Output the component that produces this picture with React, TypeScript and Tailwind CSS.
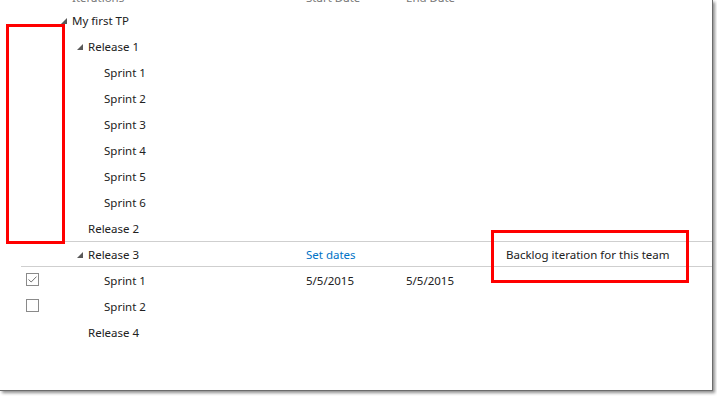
import React from "react";

type Row = {
  label: string;
  level: number;
  expanded?: boolean;
  check?: "on" | "off";
  start?: string;
  end?: string;
  link?: boolean;
  selected?: boolean;
};

const rows: Row[] = [
  { label: "My first TP", level: 0, expanded: true },
  { label: "Release 1", level: 1, expanded: true },
  { label: "Sprint 1", level: 2 },
  { label: "Sprint 2", level: 2 },
  { label: "Sprint 3", level: 2 },
  { label: "Sprint 4", level: 2 },
  { label: "Sprint 5", level: 2 },
  { label: "Sprint 6", level: 2 },
  { label: "Release 2", level: 1 },
  { label: "Release 3", level: 1, expanded: true, link: true, selected: true },
  { label: "Sprint 1", level: 2, check: "on", start: "5/5/2015", end: "5/5/2015" },
  { label: "Sprint 2", level: 2, check: "off" },
  { label: "Release 4", level: 1 },
];

const pad = ["pl-[10px]", "pl-[26px]", "pl-[42px]"];

const Caret = () => (
  <svg width="6" height="6" viewBox="0 0 6 6" className="block -mt-[1px]">
    <path d="M6 0 L6 6 L0 6 Z" fill="#595959" />
  </svg>
);

const CheckBox = ({ on }: { on: boolean }) => (
  <div className="w-[13px] h-[13px] -mt-[3px] border border-[#8a8a8a] bg-white flex items-center justify-center">
    {on && (
      <svg width="9" height="7" viewBox="0 0 9 7">
        <path d="M0.5 3.5 L3.2 6 L8.5 0.6" fill="none" stroke="#6f6f6f" strokeWidth="1" />
      </svg>
    )}
  </div>
);

export default function App() {
  return (
    <div className="w-[717px] h-[396px] bg-white" style={{ fontFamily: "'Segoe UI', 'Noto Sans', sans-serif" }}>
      <div className="relative w-[713px] h-[391px] bg-white border-r border-b border-[#6b6b6b] shadow-[2px_2px_3px_rgba(0,0,0,0.45)] overflow-hidden text-[11.5px] text-[#212121]">
        {/* column headers, scrolled mostly out of view */}
        <div className="h-[7px] overflow-hidden flex text-[#777]">
          <div className="w-[72px] shrink-0" />
          <div className="w-[234px] shrink-0 -mt-[11px]">Iterations</div>
          <div className="w-[100px] shrink-0 -mt-[11px]">Start Date</div>
          <div className="w-[100px] shrink-0 -mt-[11px]">End Date</div>
        </div>

        {rows.map((r, i) => (
          <div
            key={i}
            className={
              "flex items-center h-[26px] pt-[2px] ml-[21px] " +
              (r.selected ? "border-y border-[#cfcfcf]" : "border-y border-transparent")
            }
          >
            <div className="w-[30px] shrink-0 pl-[5px]">
              {r.check && <CheckBox on={r.check === "on"} />}
            </div>
            <div className={"w-[255px] shrink-0 flex items-center " + pad[r.level]}>
              <div className="w-[11px] shrink-0">{r.expanded && <Caret />}</div>
              <span>{r.label}</span>
            </div>
            <div className="w-[100px] shrink-0">
              {r.link ? <span className="text-[#0072c6]">Set dates</span> : r.start}
            </div>
            <div className="w-[100px] shrink-0">{r.end}</div>
            <div>{r.selected && "Backlog iteration for this team"}</div>
          </div>
        ))}

        {/* annotation boxes */}
        <div className="absolute left-[6px] top-[24px] w-[59px] h-[220px] border-[3px] border-[#ff0000]" />
        <div className="absolute left-[491px] top-[230px] w-[198px] h-[53px] border-[3px] border-[#ff0000]" />
      </div>
    </div>
  );
}
